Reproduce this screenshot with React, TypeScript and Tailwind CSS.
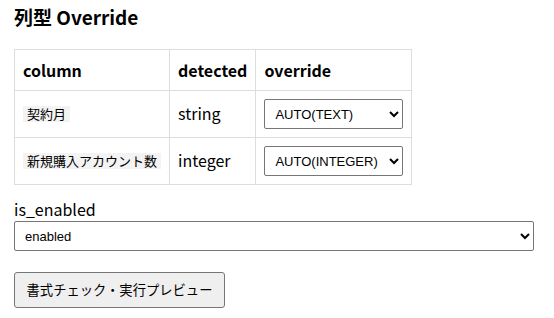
import { useState } from "react";

const rows = [
  { column: "契約月", detected: "string", value: "AUTO(TEXT)" },
  { column: "新規購入アカウント数", detected: "integer", value: "AUTO(INTEGER)" },
];

const font = "font-['Noto_Sans_CJK_JP','Noto_Sans',sans-serif]";
const selectFont = "font-['Liberation_Sans','Noto_Sans_CJK_JP',sans-serif]";

export default function App() {
  const [enabled, setEnabled] = useState("enabled");

  return (
    <div className={`${font} px-[14px] pt-[3px] text-black bg-white`}>
      <h2 className="text-[19px] leading-[28px] font-bold mb-[18px]">列型 Override</h2>

      <table className="border-collapse">
        <thead>
          <tr>
            <th className="border border-[#dddddd] p-2 text-left text-[16px] leading-6 font-bold w-[155px]">column</th>
            <th className="border border-[#dddddd] p-2 text-left text-[16px] leading-6 font-bold w-[86px]">detected</th>
            <th className="border border-[#dddddd] p-2 text-left text-[16px] leading-6 font-bold w-[156px]">override</th>
          </tr>
        </thead>
        <tbody>
          {rows.map((r) => (
            <tr key={r.column}>
              <td className="border border-[#dddddd] px-2 py-2 text-[13px] leading-4 align-middle">
                <code className={`${font} bg-[#f3f3f3] px-1 text-[13px] leading-4 inline-block`}>{r.column}</code>
              </td>
              <td className="border border-[#dddddd] px-2 pt-[6px] pb-2 text-[16px] leading-6 align-middle">{r.detected}</td>
              <td className="border border-[#dddddd] px-2 py-2 align-middle">
                <select
                  defaultValue={r.value}
                  className={`${selectFont} block w-[139px] h-[30px] border border-[#767676] rounded-[2px] bg-white pl-[6px] text-[13px]`}
                >
                  <option>AUTO(TEXT)</option>
                  <option>AUTO(INTEGER)</option>
                  <option>TEXT</option>
                  <option>INTEGER</option>
                </select>
              </td>
            </tr>
          ))}
        </tbody>
      </table>

      <label className="block mt-3 text-[16px] leading-6">is_enabled</label>
      <select
        value={enabled}
        onChange={(e) => setEnabled(e.target.value)}
        className={`${selectFont} block w-[520px] h-[30px] border border-[#767676] rounded-[2px] bg-white pl-[6px] text-[13px]`}
      >
        <option value="enabled">enabled</option>
        <option value="disabled">disabled</option>
      </select>

      <button className={`${font} mt-[21px] h-[36px] w-[211px] border border-[#767676] rounded-[3px] bg-[#efefef] text-[13.3px] text-black`}>
        書式チェック・実行プレビュー
      </button>
    </div>
  );
}
